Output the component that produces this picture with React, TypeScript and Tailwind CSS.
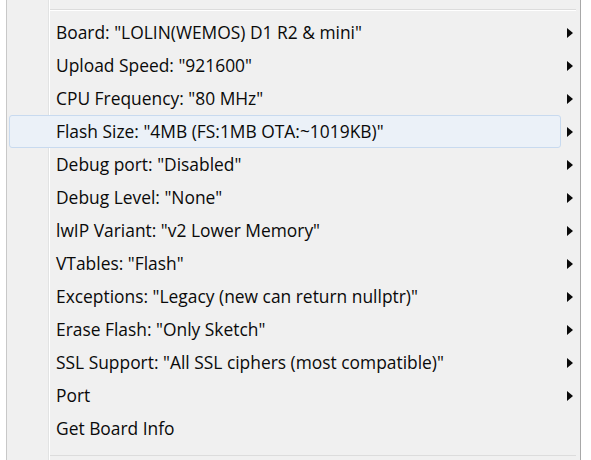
type Item = { label: string; sub?: boolean; active?: boolean };

const items: Item[] = [
  { label: 'Board: "LOLIN(WEMOS) D1 R2 & mini"', sub: true },
  { label: 'Upload Speed: "921600"', sub: true },
  { label: 'CPU Frequency: "80 MHz"', sub: true },
  { label: 'Flash Size: "4MB (FS:1MB OTA:~1019KB)"', sub: true, active: true },
  { label: 'Debug port: "Disabled"', sub: true },
  { label: 'Debug Level: "None"', sub: true },
  { label: 'lwIP Variant: "v2 Lower Memory"', sub: true },
  { label: 'VTables: "Flash"', sub: true },
  { label: 'Exceptions: "Legacy (new can return nullptr)"', sub: true },
  { label: 'Erase Flash: "Only Sketch"', sub: true },
  { label: 'SSL Support: "All SSL ciphers (most compatible)"', sub: true },
  { label: 'Port', sub: true },
  { label: 'Get Board Info' },
];

const Arrow = () => (
  <svg width="6" height="10" viewBox="0 0 6 10" className="shrink-0">
    <path d="M0 0 L6 5 L0 10 Z" fill="#0a0a0a" />
  </svg>
);

export default function App() {
  return (
    <div
      className="w-[591px] h-[460px] bg-white flex overflow-hidden"
      style={{ fontFamily: '"Open Sans", "Noto Sans", sans-serif' }}
    >
      <div className="w-[7px] shrink-0 border-r border-[#c8c8c8] bg-white" />
      <div className="w-[574px] shrink-0 bg-[#f0f0f0] border-r border-[#a8a8a8] relative">
        {/* icon gutter divider */}
        <div className="absolute left-[41px] top-0 bottom-0 w-px bg-[#e2e3e3]" />
        <div className="absolute left-[42px] top-0 bottom-0 w-px bg-white" />
        <div className="ml-[43px] mr-[4px] mt-[9px] h-px bg-[#dcdcdc]" />
        <div className="h-px ml-[43px] mr-[4px] bg-white" />
        <div className="pt-[5px] flex flex-col">
          {items.map((it) => (
            <div key={it.label} className="h-[33px] flex items-center">
              <div
                className={
                  'relative h-[33px] w-[552px] ml-[2px] flex items-center pl-[46px] rounded-[3px] border ' +
                  (it.active
                    ? 'border-[#c8daef] bg-[#ebf1f8]'
                    : 'border-transparent')
                }
              >
                <span className="text-[17.4px] text-[#0a0a0a] whitespace-nowrap">
                  {it.label}
                </span>
              </div>
              <div className="ml-[6px] flex items-center">
                {it.sub && <Arrow />}
              </div>
            </div>
          ))}
        </div>
        <div className="absolute left-[43px] right-[4px] top-[455px] h-px bg-[#dcdcdc]" />
      </div>
      <div className="flex-1 bg-white" />
    </div>
  );
}
